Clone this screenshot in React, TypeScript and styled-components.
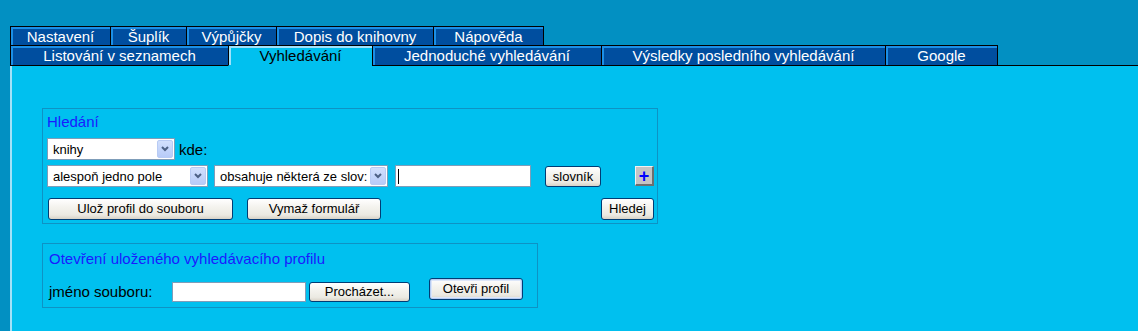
import React from "react";
import styled, { createGlobalStyle } from "styled-components";

const Global = createGlobalStyle`
  html, body { margin: 0; padding: 0; }
  body {
    background: #0290c2;
    font-family: "Liberation Sans", Arial, sans-serif;
    overflow: hidden;
  }
`;

const Page = styled.div`
  padding-top: 26px;
  height: 331px;
  box-sizing: border-box;
  display: flex;
  flex-direction: column;
`;

const TopRow = styled.div`
  display: flex;
  margin-left: 10px;
  align-self: flex-start;
  border: 1px solid #000;
  border-bottom: none;
`;

const TabStrip = styled.div`
  display: flex;
  margin-left: 10px;
`;

const BottomRow = styled.div`
  display: flex;
  border-top: 1px solid #000;
  border-left: 1px solid #000;
  border-right: 1px solid #000;
`;

const Filler = styled.div`
  flex: 1;
  border-bottom: 1px solid #000;
`;

const Tab = styled.div<{ $w: number; $active?: boolean; $low?: boolean }>`
  width: ${(p) => p.$w}px;
  height: 18px;
  box-sizing: border-box;
  padding-top: 1px;
  background: ${(p) => (p.$active ? "#00c0ef" : "#004e9f")};
  box-shadow: inset 2px 2px 0 ${(p) => (p.$active ? "#9fe2fb" : "#1b8fe6")};
  color: ${(p) => (p.$active ? "#000" : "#fff")};
  font-size: 15px;
  line-height: 17px;
  text-align: center;
  white-space: nowrap;
  overflow: hidden;
  & + & { border-left: 1px solid #000; }
  ${(p) =>
    p.$low
      ? `border-bottom: 1px solid ${p.$active ? "#00c0ef" : "#000"}; height: 20px;`
      : ""}
`;

const Content = styled.div`
  flex: 1;
  margin-left: 10px;
  background: #00c0ef;
  border-left: 2px solid #a2e2f8;
  padding: 42px 0 0 30px;
`;

const Box = styled.div<{ $w: number }>`
  width: ${(p) => p.$w}px;
  box-sizing: border-box;
  border: 1px solid #0e92c4;
`;

const SearchBox = styled(Box)`
  padding: 5px 3px 3px 4px;
`;

const ProfileBox = styled(Box)`
  margin-top: 19px;
  padding: 7px 3px 5px 6px;
`;

const Title = styled.div`
  color: #1a1aff;
  font-size: 15px;
  line-height: 15px;
`;

const Row = styled.div<{ $top: number }>`
  display: flex;
  align-items: flex-start;
  margin-top: ${(p) => p.$top}px;
`;

const Select = styled.div<{ $w: number; $gap?: number }>`
  width: ${(p) => p.$w}px;
  height: 22px;
  box-sizing: border-box;
  margin-left: ${(p) => p.$gap ?? 0}px;
  border: 1px solid #7f9db9;
  background: #fff;
  display: flex;
  align-items: center;
  padding-left: 5px;
  font-size: 13px;
  color: #000;
  white-space: nowrap;
  overflow: hidden;
`;

const SelectText = styled.span`
  flex: 1;
  overflow: hidden;
`;

const Arrow = styled.div`
  width: 16px;
  height: 18px;
  margin: 0 1px 0 2px;
  box-sizing: border-box;
  border: 1px solid #b8cbf4;
  border-radius: 2px;
  background: linear-gradient(#d2e0fd, #b7cbf8);
  display: flex;
  align-items: center;
  justify-content: center;
  flex: none;
`;

const Label = styled.span<{ $gap?: number; $top?: number; $w?: number }>`
  font-size: 15px;
  line-height: 20px;
  color: #000;
  margin-left: ${(p) => p.$gap ?? 0}px;
  margin-top: ${(p) => p.$top ?? 0}px;
  ${(p) => (p.$w ? `width: ${p.$w}px;` : "")}
`;

const TextInput = styled.div<{ $w: number; $h: number; $gap?: number; $top?: number }>`
  width: ${(p) => p.$w}px;
  height: ${(p) => p.$h}px;
  box-sizing: border-box;
  margin-left: ${(p) => p.$gap ?? 0}px;
  margin-top: ${(p) => p.$top ?? 0}px;
  border: 1px solid #7f9db9;
  background: #fff;
  display: flex;
  align-items: center;
  padding-left: 2px;
`;

const Caret = styled.span`
  width: 1px;
  height: 15px;
  background: #000;
`;

const Button = styled.button<{ $w: number; $h?: number; $gap?: number; $top?: number; $right?: boolean; $default?: boolean }>`
  width: ${(p) => p.$w}px;
  height: ${(p) => p.$h ?? 22}px;
  margin: ${(p) => p.$top ?? 0}px 0 0 ${(p) => (p.$right ? "auto" : `${p.$gap ?? 0}px`)};
  padding: 0;
  box-sizing: border-box;
  border: 1px solid #003c74;
  border-radius: 3px;
  background: linear-gradient(#ffffff 0%, #f4f3ee 40%, #ebe9e2 80%, #d8d2c6 100%);
  box-shadow: ${(p) => (p.$default ? "inset 0 0 0 1px #b6cbf2, inset 0 0 0 2px #dce6f9" : "none")};
  font-family: "Liberation Sans", Arial, sans-serif;
  font-size: 13px;
  color: #000;
  line-height: 18px;
  cursor: default;
`;

const PlusButton = styled.button`
  width: 19px;
  height: 20px;
  margin: 1px 0 0 auto;
  padding: 0;
  box-sizing: border-box;
  background: #c4c4c4;
  border-style: solid;
  border-width: 1px 2px 2px 1px;
  border-color: #f2f2f2 #6e6e6e #6e6e6e #f2f2f2;
  color: #0000ff;
  font-family: "Liberation Sans", Arial, sans-serif;
  font-weight: bold;
  font-size: 18px;
  line-height: 16px;
  display: flex;
  align-items: center;
  justify-content: center;
`;

const Chevron = () => (
  <svg width="8" height="6" viewBox="0 0 8 6">
    <path d="M1 1 L4 4 L7 1" fill="none" stroke="#4d6185" strokeWidth="2" />
  </svg>
);

const Combo = ({ w, gap, text }: { w: number; gap?: number; text: string }) => (
  <Select $w={w} $gap={gap}>
    <SelectText>{text}</SelectText>
    <Arrow>
      <Chevron />
    </Arrow>
  </Select>
);

export default function App() {
  return (
    <>
      <Global />
      <Page>
        <TopRow>
          <Tab $w={99}>Nastavení</Tab>
          <Tab $w={76}>Šuplík</Tab>
          <Tab $w={90}>Výpůjčky</Tab>
          <Tab $w={157}>Dopis do knihovny</Tab>
          <Tab $w={110}>Nápověda</Tab>
        </TopRow>
        <TabStrip>
          <BottomRow>
            <Tab $low $w={217}>Listování v seznamech</Tab>
            <Tab $low $active $w={144}>Vyhledávání</Tab>
            <Tab $low $w={229}>Jednoduché vyhledávání</Tab>
            <Tab $low $w={284}>Výsledky posledního vyhledávání</Tab>
            <Tab $low $w={112}>Google</Tab>
          </BottomRow>
          <Filler />
        </TabStrip>
        <Content>
          <SearchBox $w={616}>
            <Title>Hledání</Title>
            <Row $top={9}>
              <Combo w={128} text="knihy" />
              <Label $gap={4} $top={2}>kde:</Label>
            </Row>
            <Row $top={5}>
              <Combo w={161} text="alespoň jedno pole" />
              <Combo w={174} gap={6} text="obsahuje některá ze slov:" />
              <TextInput $w={136} $h={22} $gap={7}>
                <Caret />
              </TextInput>
              <Button $w={56} $h={21} $gap={14} $top={1}>slovník</Button>
              <PlusButton>+</PlusButton>
            </Row>
            <Row $top={11}>
              <Button $w={185} $gap={1}>Ulož profil do souboru</Button>
              <Button $w={134} $gap={14}>Vymaž formulář</Button>
              <Button $w={53} $right>Hledej</Button>
            </Row>
          </SearchBox>
          <ProfileBox $w={496}>
            <Title>Otevření uloženého vyhledávacího profilu</Title>
            <Row $top={12}>
              <Label $top={4} $w={123}>jméno souboru:</Label>
              <TextInput $w={134} $h={20} $top={4} />
              <Button $w={101} $h={20} $gap={3} $top={4}>Procházet...</Button>
              <Button $w={94} $h={22} $gap={19} $default>Otevři profil</Button>
            </Row>
          </ProfileBox>
        </Content>
      </Page>
    </>
  );
}
